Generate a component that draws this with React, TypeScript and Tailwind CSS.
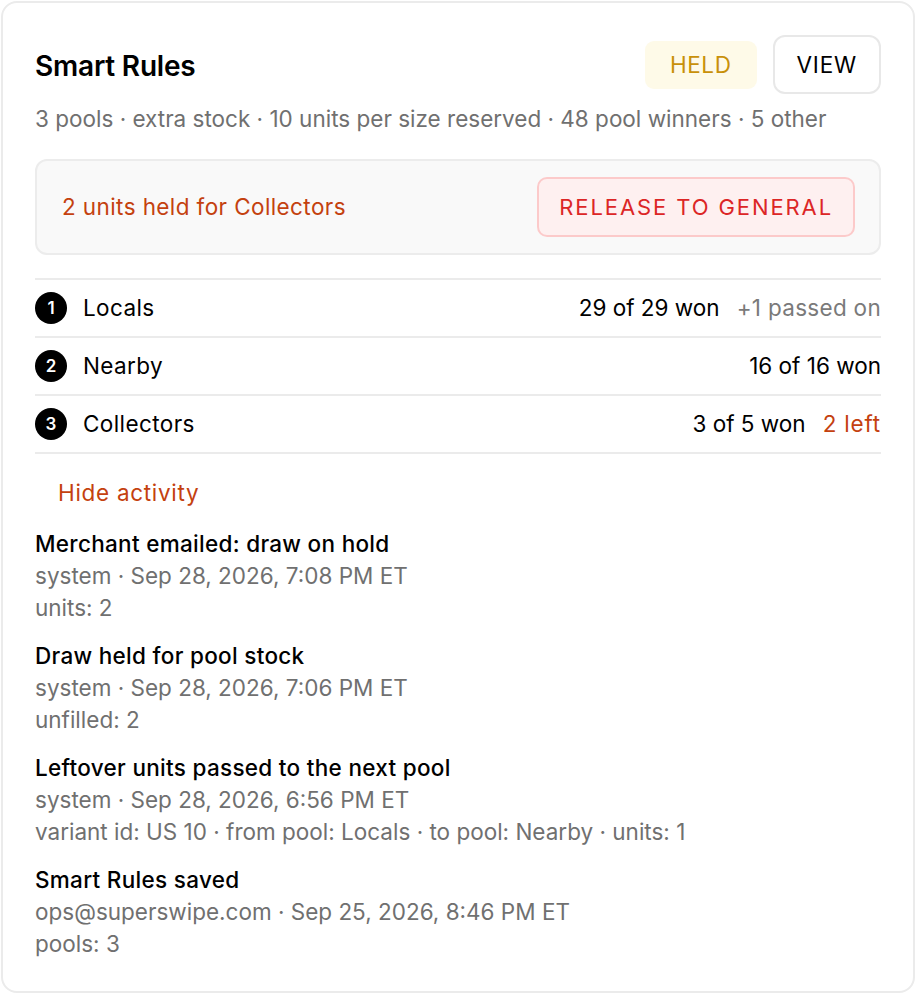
import React from 'react';

const pools = [
  { n: 1, name: 'Locals', won: '29 of 29 won', extra: '+1 passed on', extraTone: 'gray' },
  { n: 2, name: 'Nearby', won: '16 of 16 won', extra: '', extraTone: '' },
  { n: 3, name: 'Collectors', won: '3 of 5 won', extra: '2 left', extraTone: 'orange' },
];

const activity = [
  {
    title: 'Merchant emailed: draw on hold',
    meta: 'system · Sep 28, 2026, 7:08 PM ET',
    detail: 'units: 2',
  },
  {
    title: 'Draw held for pool stock',
    meta: 'system · Sep 28, 2026, 7:06 PM ET',
    detail: 'unfilled: 2',
  },
  {
    title: 'Leftover units passed to the next pool',
    meta: 'system · Sep 28, 2026, 6:56 PM ET',
    detail: 'variant id: US 10 · from pool: Locals · to pool: Nearby · units: 1',
  },
  {
    title: 'Smart Rules saved',
    meta: 'ops@superswipe.com · Sep 25, 2026, 8:46 PM ET',
    detail: 'pools: 3',
  },
];

export default function App() {
  return (
    <div className="p-px bg-white font-['Inter','Liberation_Sans',sans-serif] text-[22.5px] leading-[32px] text-black">
      <div className="w-[914px] border-2 border-[#ebebeb] rounded-[16px] p-8 pb-[31px]">
        {/* Header */}
        <div className="flex items-center justify-between">
          <h2 className="text-[28px] font-semibold tracking-[-0.2px] pt-[3px]">Smart Rules</h2>
          <div className="flex items-center gap-4">
            <span className="h-12 px-[25px] flex items-center rounded-[9px] bg-[#fefae8] text-[#c8900a] tracking-[0.6px]">
              HELD
            </span>
            <button className="h-[59px] px-[22px] border-2 border-[#e8e8e8] rounded-[12px] bg-white tracking-[0.8px]">
              VIEW
            </button>
          </div>
        </div>
        <p className="mt-[9px] text-[#707070]">
          3 pools · extra stock · 10 units per size reserved · 48 pool winners · 5 other
        </p>

        {/* Hold notice */}
        <div className="mt-[24px] flex items-center justify-between border-2 border-[#ececec] bg-[#f9f9f9] rounded-[12px] pl-[25px] pr-[24px] py-4">
          <span className="text-[#c4410f] tracking-[0.4px]">2 units held for Collectors</span>
          <button className="h-[60px] px-[20px] border-2 border-[#fccaca] bg-[#fef0f0] rounded-[10px] text-[#dc2626] text-[22px] tracking-[1.9px]">
            RELEASE TO GENERAL
          </button>
        </div>

        {/* Pools */}
        <div className="mt-[23px] border-b-2 border-[#ebebeb]">
          {pools.map(p => (
            <div key={p.n} className="h-[58px] border-t-2 border-[#ebebeb] flex items-center justify-between">
              <div className="flex items-center gap-4">
                <span className="w-8 h-8 rounded-full bg-black text-white text-[17px] font-semibold flex items-center justify-center">
                  {p.n}
                </span>
                <span className="tracking-[0.4px]">{p.name}</span>
              </div>
              <div className="flex items-center gap-[17px]">
                <span>{p.won}</span>
                {p.extra && (
                  <span
                    className={
                      p.extraTone === 'orange'
                        ? 'text-[#c4410f] tracking-[0.8px]'
                        : 'text-[#7a7a7a] tracking-[0.3px]'
                    }
                  >
                    {p.extra}
                  </span>
                )}
              </div>
            </div>
          ))}
        </div>

        {/* Activity */}
        <button className="mt-[23px] pl-[23px] text-[#c4410f] tracking-[0.7px]">Hide activity</button>
        <div className="mt-[19px] flex flex-col gap-4">
          {activity.map(a => (
            <div key={a.title}>
              <div className="font-medium tracking-[0.3px]">{a.title}</div>
              <div className="text-[#707070]">{a.meta}</div>
              <div className="text-[#707070]">{a.detail}</div>
            </div>
          ))}
        </div>
      </div>
    </div>
  );
}
